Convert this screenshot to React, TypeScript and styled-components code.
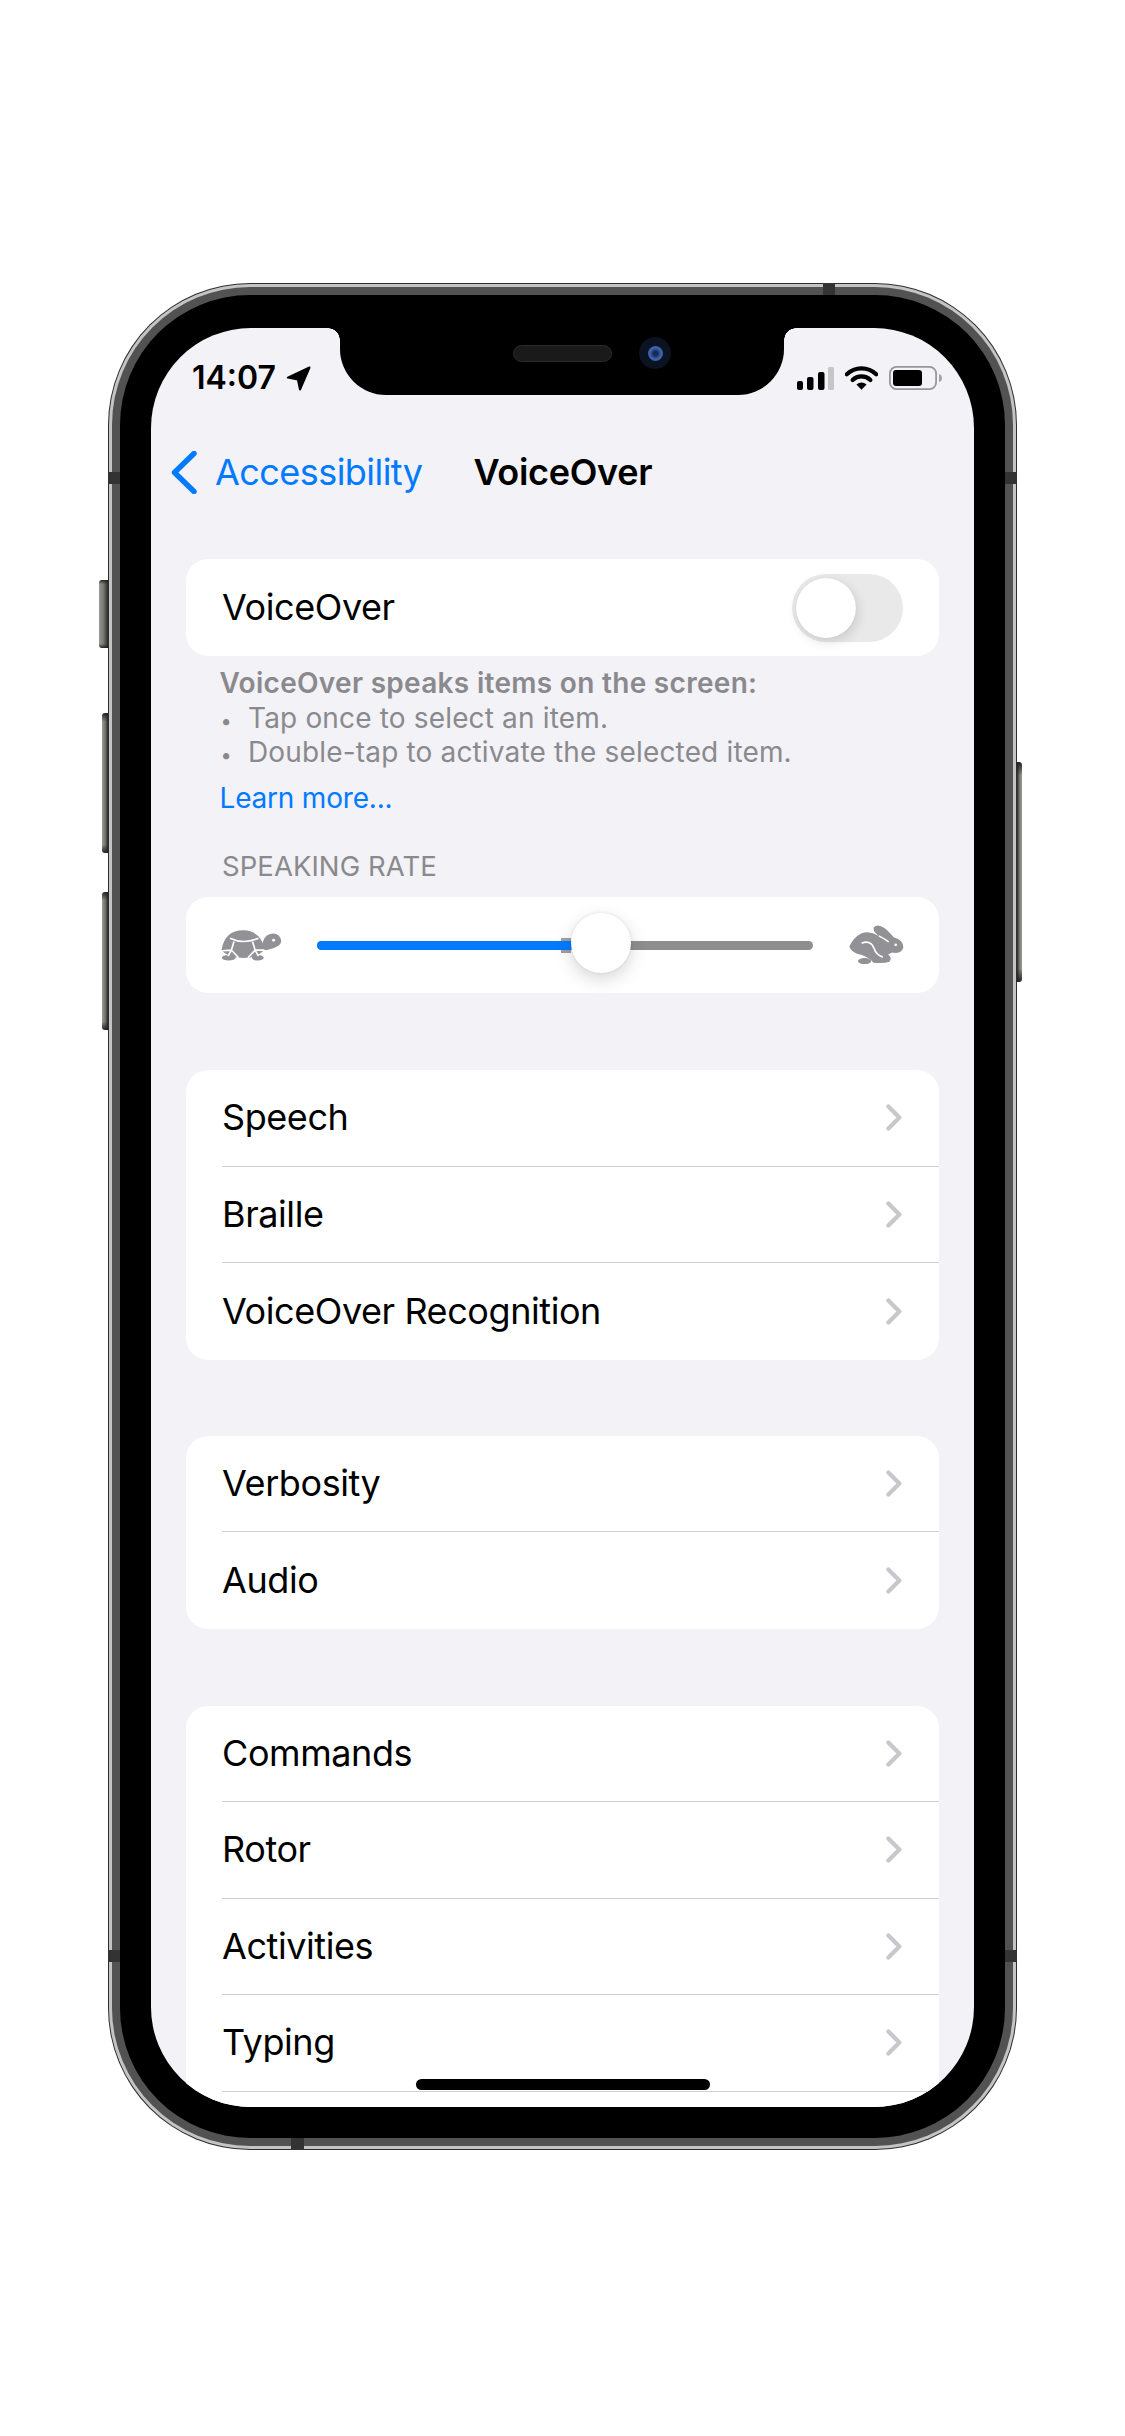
import React from 'react';
import styled, { createGlobalStyle } from 'styled-components';

const blue = '#007aff';
const labelGray = '#8a8a8e';
const iconGray = '#919196';

const GlobalStyle = createGlobalStyle`
  html, body {
    margin: 0;
    padding: 0;
    background: #fff;
  }

  body {
    font-family: Inter, "Noto Sans", sans-serif;
    -webkit-font-smoothing: antialiased;
  }
`;

const Page = styled.div`
  display: flex;
  justify-content: center;
  box-sizing: border-box;
  height: 2436px;
  padding-top: 283px;
  background: #fff;
  overflow: hidden;
`;

const Phone = styled.div`
  position: relative;
  width: 909px;
  height: 1867px;
`;

const Shell = styled.div`
  box-sizing: border-box;
  height: 100%;
  padding: 1px;
  border-radius: 142px;
  background: #2e2e2e;
`;

const Rim = styled.div`
  box-sizing: border-box;
  height: 100%;
  padding: 3px;
  border-radius: 141px;
  background: #c4c4c4;
`;

const Band = styled.div`
  box-sizing: border-box;
  height: 100%;
  padding: 8px;
  border-radius: 138px;
  background: #525252;
`;

const Bezel = styled.div`
  box-sizing: border-box;
  height: 100%;
  padding: 33px 31px 31px;
  border-radius: 130px;
  background: #000;
`;

const Antenna = styled.div<{ $top?: number; $left?: number; $w: number; $h: number }>`
  position: absolute;
  top: ${(p) => p.$top ?? 0}px;
  left: ${(p) => p.$left ?? 0}px;
  width: ${(p) => p.$w}px;
  height: ${(p) => p.$h}px;
  background: #333;
`;

const SideButton = styled.div<{ $top: number; $height: number; $width: number; $right?: boolean }>`
  position: absolute;
  top: ${(p) => p.$top}px;
  ${(p) => (p.$right ? 'right' : 'left')}: -${(p) => p.$width}px;
  width: ${(p) => p.$width}px;
  height: ${(p) => p.$height}px;
  border-radius: ${(p) => (p.$right ? '0 3px 3px 0' : '3px 0 0 3px')};
  background:
    linear-gradient(180deg, #222 0, transparent 6%, transparent 94%, #222 100%),
    linear-gradient(${(p) => (p.$right ? '270deg' : '90deg')}, #9a9a9a 0, #77776f 50%, #2a2a2a 100%);
`;

const Screen = styled.div`
  position: relative;
  height: 100%;
  border-radius: 100px;
  background: #f2f2f7;
  overflow: hidden;
`;

const Notch = styled.div`
  position: absolute;
  top: 0;
  left: 189px;
  width: 444px;
  height: 67px;
  border-radius: 0 0 46px 46px;
  background: #000;

  &::before,
  &::after {
    content: '';
    position: absolute;
    top: 0;
    width: 12px;
    height: 12px;
  }

  &::before {
    left: -12px;
    background: radial-gradient(circle at 0 100%, transparent 11.5px, #000 12px);
  }

  &::after {
    right: -12px;
    background: radial-gradient(circle at 100% 100%, transparent 11.5px, #000 12px);
  }
`;

const Speaker = styled.div`
  position: absolute;
  top: 17px;
  left: 173px;
  width: 99px;
  height: 17px;
  box-sizing: border-box;
  border: 1px solid #2b2b2b;
  border-radius: 9px;
  background: #1a1a1a;
`;

const Camera = styled.div`
  position: absolute;
  top: 9px;
  left: 299px;
  display: flex;
  align-items: center;
  justify-content: center;
  width: 32px;
  height: 32px;
  border-radius: 50%;
  background: #0b1220;

  &::after {
    content: '';
    width: 15px;
    height: 15px;
    border-radius: 50%;
    background: radial-gradient(circle at 50% 50%, #1a2a55 0, #1a2a55 20%, #3f66b4 55%, #2b4a8c 100%);
  }
`;

const HomeIndicator = styled.div`
  position: absolute;
  bottom: 17px;
  left: 265px;
  width: 294px;
  height: 11px;
  border-radius: 6px;
  background: #000;
`;

const StatusBar = styled.div`
  display: flex;
  align-items: center;
  justify-content: space-between;
  box-sizing: border-box;
  height: 100px;
  padding: 0 32px 0 41px;
`;

const StatusLeft = styled.div`
  display: flex;
  align-items: center;
  gap: 10px;
`;

const StatusRight = styled.div`
  display: flex;
  align-items: center;
  gap: 11px;
`;

const Time = styled.span`
  font-size: 32px;
  font-weight: 600;
  line-height: 40px;
  color: #000;
`;

const NavBar = styled.div`
  position: relative;
  display: flex;
  align-items: center;
  height: 88px;
  padding-left: 20px;
`;

const BackLabel = styled.span`
  margin-left: 18px;
  font-size: 36px;
  letter-spacing: -0.55px;
  color: ${blue};
`;

const NavTitle = styled.span`
  margin-left: 51px;
  font-size: 36px;
  font-weight: 600;
  letter-spacing: -0.3px;
  color: #000;
`;

const Content = styled.div`
  padding: 43px 35px 0;
`;

const Card = styled.div<{ $gap?: number }>`
  margin-top: ${(p) => p.$gap ?? 0}px;
  border-radius: 22px;
  background: #fff;
  overflow: hidden;
`;

const OpenCard = styled(Card)`
  border-radius: 22px 22px 0 0;
  padding-bottom: 40px;
`;

const Row = styled.div`
  display: flex;
  align-items: center;
  justify-content: space-between;
  box-sizing: border-box;
  height: 96.5px;
  margin-left: 36px;
  padding-right: 37px;
  border-bottom: 1px solid #d0d0d2;
`;

const LastRow = styled(Row)`
  border-bottom: 0;
`;

const RowLabel = styled.span`
  margin-bottom: 1px;
  font-size: 36px;
  letter-spacing: -0.42px;
  color: #000;
`;

const ToggleRow = styled(LastRow)`
  height: 97px;
  padding-right: 36px;
`;

const ToggleTrack = styled.div`
  box-sizing: border-box;
  width: 111px;
  height: 68px;
  padding: 4px;
  border-radius: 34px;
  background: #e9e9ea;
`;

const ToggleKnob = styled.div`
  width: 60px;
  height: 60px;
  border-radius: 50%;
  background: #fff;
  box-shadow: 2px 4px 12px rgba(0, 0, 0, 0.13), 0 0 1px rgba(0, 0, 0, 0.15);
`;

const Footer = styled.div`
  padding: 10px 0 0 33.5px;
  font-size: 28px;
  line-height: 34.5px;
  letter-spacing: 0.16px;
  color: ${labelGray};
`;

const FooterHead = styled.div`
  font-weight: 600;
  letter-spacing: 0.3px;
`;

const FooterItem = styled.div`
  display: flex;
  align-items: baseline;
`;

const Bullet = styled.span`
  box-sizing: border-box;
  width: 28.5px;
  padding-left: 1px;
  font-size: 20px;
  line-height: 20px;
`;

const LearnMore = styled.div`
  margin-top: 11px;
  letter-spacing: -0.2px;
  color: ${blue};
`;

const SectionHeader = styled.div`
  margin: 34px 0 13.5px 36px;
  font-size: 27.5px;
  line-height: 34.5px;
  letter-spacing: 0.05px;
  color: ${labelGray};
`;

const SliderCard = styled(Card)`
  display: flex;
  align-items: center;
  gap: 34px;
  box-sizing: border-box;
  height: 96px;
  padding: 0 34px;
  overflow: visible;
`;

const Track = styled.div`
  position: relative;
  flex: 1;
  height: 9px;
  border-radius: 5px;
  background: #8e8e90;
`;

const TrackFill = styled.div`
  position: absolute;
  top: 0;
  left: 0;
  height: 100%;
  border-radius: 5px 0 0 5px;
  background: ${blue};
`;

const TrackNub = styled.div`
  position: absolute;
  top: -3px;
  width: 10px;
  height: 15px;
  margin-left: -40px;
  background: #a0a0a2;
`;

const Thumb = styled.div`
  position: absolute;
  top: -28px;
  width: 60px;
  height: 60px;
  margin-left: -30px;
  border-radius: 50%;
  background: #fff;
  box-shadow: 0 6px 18px rgba(0, 0, 0, 0.16), 0 0 3px rgba(0, 0, 0, 0.1);
`;

const RATE = 0.573;

const LocationIcon = () => (
  <svg width='25' height='25' viewBox='0 0 25 25' fill='#000'>
    <path d='M23.5 1.5 L1.8 11.6 L11.8 13.4 L14 23.5 Z' stroke='#000' strokeWidth='2' strokeLinejoin='round' />
  </svg>
);

const SignalIcon = () => (
  <svg width='37' height='23' viewBox='0 0 37 23'>
    <rect x='0' y='14' width='6' height='9' rx='2' fill='#000' />
    <rect x='10' y='10' width='6.5' height='13' rx='2' fill='#000' />
    <rect x='21' y='5' width='6.5' height='18' rx='2' fill='#000' />
    <rect x='31' y='0' width='6' height='23' rx='1.5' fill='#c6c6c8' />
  </svg>
);

const WifiIcon = () => (
  <svg width='33' height='24' viewBox='0 0 33 24' fill='none'>
    <path d='M1.8 8.3 A21 21 0 0 1 31.2 8.3' stroke='#000' strokeWidth='4.2' strokeLinecap='round' />
    <path d='M7.6 14 A12.8 12.8 0 0 1 25.4 14' stroke='#000' strokeWidth='4.2' strokeLinecap='round' />
    <path d='M16.5 23.8 L11.4 18.6 Q16.5 14.6 21.6 18.6 Z' fill='#000' />
  </svg>
);

const BatteryIcon = () => (
  <svg width='53' height='24' viewBox='0 0 53 24'>
    <rect x='0.9' y='0.9' width='46.2' height='22.2' rx='6.5' fill='none' stroke='#98989c' strokeWidth='1.8' />
    <rect x='4' y='4' width='29' height='16' rx='3' fill='#000' />
    <path d='M50 8 Q53 9 53 12 Q53 15 50 16 Z' fill='#a4a4a8' />
  </svg>
);

const BackChevron = () => (
  <svg width='26' height='43' viewBox='0 0 26 43' fill='none'>
    <path d='M23 2.5 L3.5 21.5 L23 40.5' stroke={blue} strokeWidth='5.4' strokeLinecap='round' strokeLinejoin='round' />
  </svg>
);

const Chevron = () => (
  <svg width='16' height='27' viewBox='0 0 16 27' fill='none'>
    <path d='M2.4 2.4 L13.4 13.5 L2.4 24.6' stroke='#c7c7cc' strokeWidth='4.2' strokeLinecap='round' strokeLinejoin='round' />
  </svg>
);

const TurtleIcon = () => (
  <svg width='63' height='33' viewBox='120 258 190 100'>
    <path d='M124 322 Q134 262 190 262 Q240 262 256 318 Q238 344 190 346 Q140 344 124 322 Z' fill={iconGray} />
    <path d='M246 322 L262 322 Q305 312 305 295 Q302 272 280 272 Q256 274 250 296 Z' fill={iconGray} />
    <circle cx='282' cy='292' r='4.5' fill='#fff' />
    <ellipse cx='146' cy='345' rx='21' ry='8.5' fill={iconGray} />
    <ellipse cx='234' cy='345' rx='18' ry='8.5' fill={iconGray} />
    <path
      d='M150 286 Q190 306 236 286 M162 296 L154 322 L176 345 M218 296 L226 322 L204 345 M126 324 L154 322 M254 322 L226 322 M154 322 L144 340 M226 322 L236 340'
      stroke='#fff'
      strokeWidth='5'
      fill='none'
    />
  </svg>
);

const RabbitIcon = () => (
  <svg width='58' height='42' viewBox='620 245 175 125'>
    <path
      d='M627 312 Q640 284 664 272 Q690 264 716 280 L703 268 Q694 252 712 249 Q728 250 742 264 L762 285 Q790 292 790 315 Q784 336 756 330 L744 336 Q758 346 748 358 Q730 364 700 361 Q682 340 650 334 Q632 326 627 312 Z'
      fill={iconGray}
    />
    <ellipse cx='673' cy='356' rx='20' ry='9' fill={iconGray} />
    <path d='M664 302 Q690 292 701 316 Q708 338 728 344' stroke='#fff' strokeWidth='5' fill='none' />
    <path d='M716 280 Q732 288 746 298' stroke='#fff' strokeWidth='4.5' fill='none' />
    <circle cx='767' cy='307' r='4' fill='#fff' />
  </svg>
);

const NavRow: React.FC<{ label: string; last?: boolean }> = ({ label, last }) => {
  const Wrapper = last ? LastRow : Row;

  return (
    <Wrapper>
      <RowLabel>{label}</RowLabel>
      <Chevron />
    </Wrapper>
  );
};

const App: React.FC = () => {
  return (
    <>
      <GlobalStyle />
      <Page>
        <Phone>
          <SideButton $height={68} $top={297} $width={9} />
          <SideButton $height={140} $top={430} $width={6} />
          <SideButton $height={138} $top={609} $width={6} />
          <SideButton $height={220} $right $top={479} $width={5} />
          <Shell>
            <Rim>
              <Band>
                <Bezel>
                  <Screen>
                    <StatusBar>
                      <StatusLeft>
                        <Time>14:07</Time>
                        <LocationIcon />
                      </StatusLeft>
                      <StatusRight>
                        <SignalIcon />
                        <WifiIcon />
                        <BatteryIcon />
                      </StatusRight>
                    </StatusBar>
                    <NavBar>
                      <BackChevron />
                      <BackLabel>Accessibility</BackLabel>
                      <NavTitle>VoiceOver</NavTitle>
                    </NavBar>
                    <Content>
                      <Card>
                        <ToggleRow>
                          <RowLabel>VoiceOver</RowLabel>
                          <ToggleTrack>
                            <ToggleKnob />
                          </ToggleTrack>
                        </ToggleRow>
                      </Card>
                      <Footer>
                        <FooterHead>VoiceOver speaks items on the screen:</FooterHead>
                        <FooterItem>
                          <Bullet>•</Bullet>
                          Tap once to select an item.
                        </FooterItem>
                        <FooterItem>
                          <Bullet>•</Bullet>
                          Double-tap to activate the selected item.
                        </FooterItem>
                        <LearnMore>Learn more...</LearnMore>
                      </Footer>
                      <SectionHeader>SPEAKING RATE</SectionHeader>
                      <SliderCard>
                        <TurtleIcon />
                        <Track>
                          <TrackNub style={{ left: `${RATE * 100}%` }} />
                          <TrackFill style={{ width: `${RATE * 100}%` }} />
                          <Thumb style={{ left: `${RATE * 100}%` }} />
                        </Track>
                        <RabbitIcon />
                      </SliderCard>
                      <Card $gap={77}>
                        <NavRow label='Speech' />
                        <NavRow label='Braille' />
                        <NavRow label='VoiceOver Recognition' last />
                      </Card>
                      <Card $gap={76}>
                        <NavRow label='Verbosity' />
                        <NavRow label='Audio' last />
                      </Card>
                      <OpenCard $gap={77}>
                        <NavRow label='Commands' />
                        <NavRow label='Rotor' />
                        <NavRow label='Activities' />
                        <NavRow label='Typing' />
                      </OpenCard>
                    </Content>
                    <Notch>
                      <Speaker />
                      <Camera />
                    </Notch>
                    <HomeIndicator />
                  </Screen>
                </Bezel>
              </Band>
            </Rim>
          </Shell>
          <Antenna $h={12} $left={715} $w={12} />
          <Antenna $h={12} $left={183} $top={1855} $w={13} />
          <Antenna $h={12} $top={189} $w={12} />
          <Antenna $h={12} $left={897} $top={189} $w={12} />
          <Antenna $h={12} $top={1667} $w={12} />
          <Antenna $h={12} $left={897} $top={1667} $w={12} />
        </Phone>
      </Page>
    </>
  );
};

export default App;
